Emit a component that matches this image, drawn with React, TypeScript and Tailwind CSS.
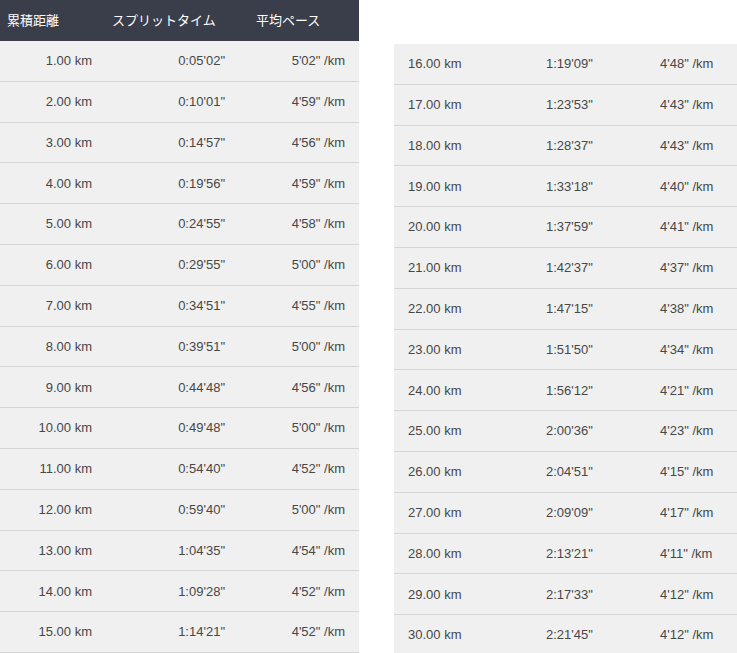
const left = [
  ['1.00 km', "0:05'02\"", "5'02\" /km"],
  ['2.00 km', "0:10'01\"", "4'59\" /km"],
  ['3.00 km', "0:14'57\"", "4'56\" /km"],
  ['4.00 km', "0:19'56\"", "4'59\" /km"],
  ['5.00 km', "0:24'55\"", "4'58\" /km"],
  ['6.00 km', "0:29'55\"", "5'00\" /km"],
  ['7.00 km', "0:34'51\"", "4'55\" /km"],
  ['8.00 km', "0:39'51\"", "5'00\" /km"],
  ['9.00 km', "0:44'48\"", "4'56\" /km"],
  ['10.00 km', "0:49'48\"", "5'00\" /km"],
  ['11.00 km', "0:54'40\"", "4'52\" /km"],
  ['12.00 km', "0:59'40\"", "5'00\" /km"],
  ['13.00 km', "1:04'35\"", "4'54\" /km"],
  ['14.00 km', "1:09'28\"", "4'52\" /km"],
  ['15.00 km', "1:14'21\"", "4'52\" /km"],
];

const right = [
  ['16.00 km', "1:19'09\"", "4'48\" /km"],
  ['17.00 km', "1:23'53\"", "4'43\" /km"],
  ['18.00 km', "1:28'37\"", "4'43\" /km"],
  ['19.00 km', "1:33'18\"", "4'40\" /km"],
  ['20.00 km', "1:37'59\"", "4'41\" /km"],
  ['21.00 km', "1:42'37\"", "4'37\" /km"],
  ['22.00 km', "1:47'15\"", "4'38\" /km"],
  ['23.00 km', "1:51'50\"", "4'34\" /km"],
  ['24.00 km', "1:56'12\"", "4'21\" /km"],
  ['25.00 km', "2:00'36\"", "4'23\" /km"],
  ['26.00 km', "2:04'51\"", "4'15\" /km"],
  ['27.00 km', "2:09'09\"", "4'17\" /km"],
  ['28.00 km', "2:13'21\"", "4'11\" /km"],
  ['29.00 km', "2:17'33\"", "4'12\" /km"],
  ['30.00 km', "2:21'45\"", "4'12\" /km"],
];

export default function App() {
  return (
    <div
      className="flex items-start bg-white w-[737px] h-[653px] overflow-hidden text-[13px] text-[#474747]"
      style={{ fontFamily: '"Liberation Sans", Arial, "Noto Sans CJK JP", sans-serif' }}
    >
      {/* Left split table */}
      <div className="w-[359px] shrink-0 bg-[#f0f0f0]">
        <div className="grid grid-cols-[105px_144px_110px] h-[41px] items-center bg-[#3a3e4a] text-white font-normal">
          <div className="pl-[7px]">累積距離</div>
          <div className="pl-[7px]">スプリットタイム</div>
          <div className="pl-[7px]">平均ペース</div>
        </div>
        {left.map((r) => (
          <div
            key={r[0]}
            className="grid grid-cols-[105px_144px_110px] h-[40.8px] items-center border-b border-[#d6d6d6] text-right"
          >
            <div className="pr-[13px]">{r[0]}</div>
            <div className="pr-[24px]">{r[1]}</div>
            <div className="pr-[14px]">{r[2]}</div>
          </div>
        ))}
      </div>

      {/* Right split table */}
      <div className="flex-1 ml-[35px] mt-[44px] bg-[#f0f0f0]">
        {right.map((r) => (
          <div
            key={r[0]}
            className="grid grid-cols-[138px_114px_1fr] h-[40.8px] items-center border-b border-[#d6d6d6]"
          >
            <div className="pl-[14px]">{r[0]}</div>
            <div className="pl-[14px]">{r[1]}</div>
            <div className="pl-[14px]">{r[2]}</div>
          </div>
        ))}
      </div>
    </div>
  );
}
